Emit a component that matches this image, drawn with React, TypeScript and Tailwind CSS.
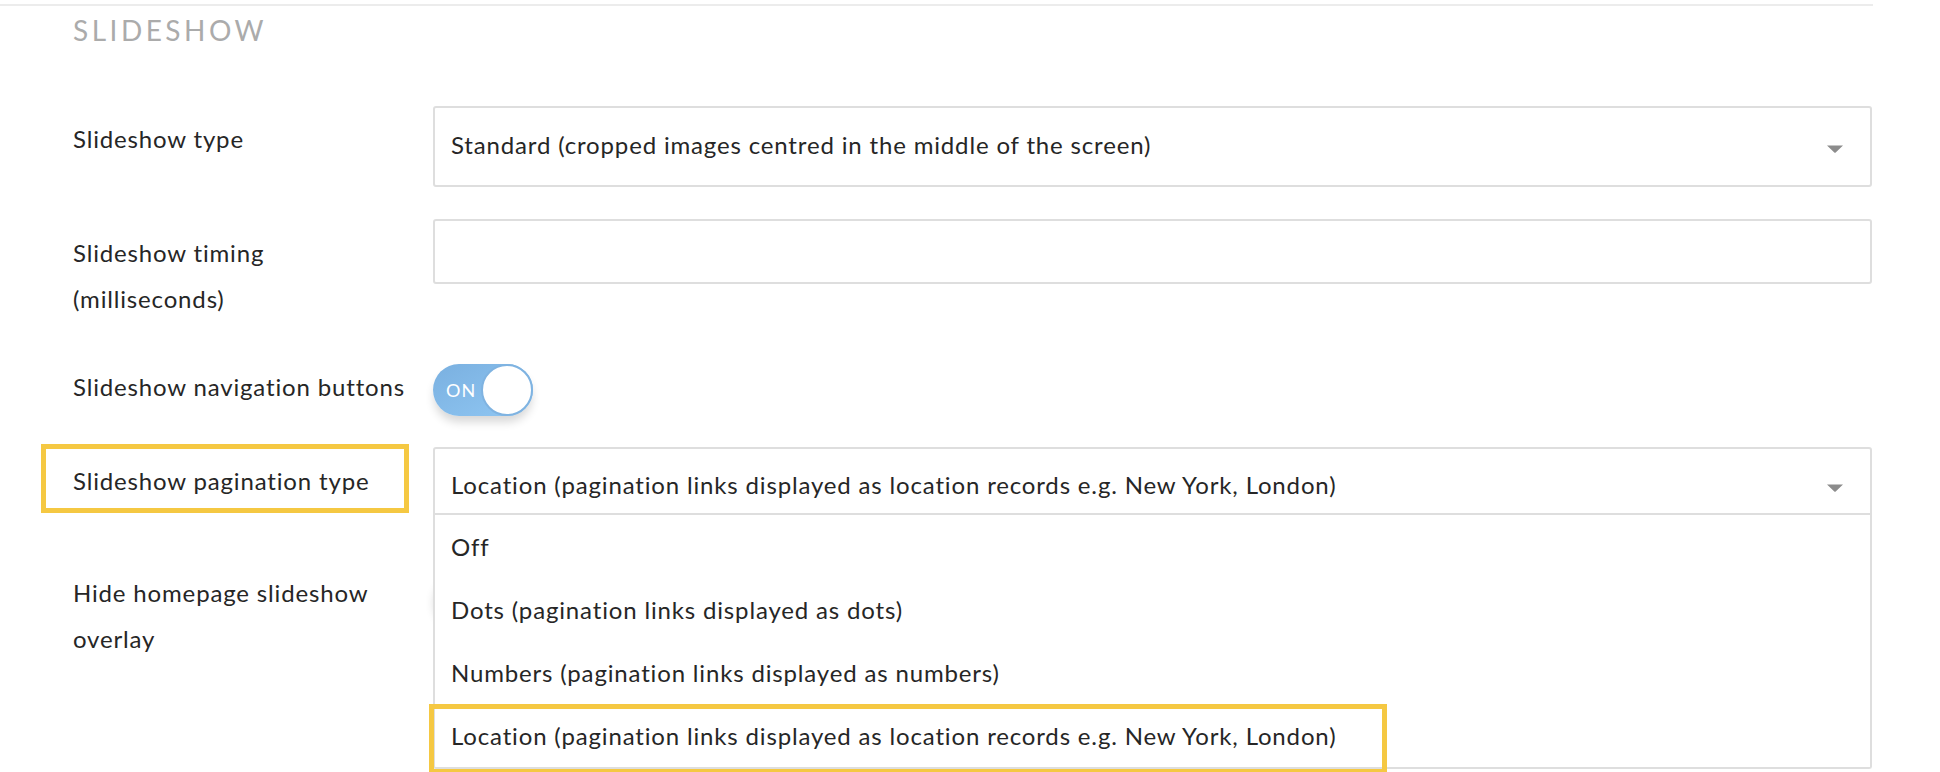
import React from 'react'

const Caret = ({ offset }: { offset: string }) => (
  <svg width="16" height="8" viewBox="0 0 16 8" className={`shrink-0 ${offset}`}>
    <path d="M0 0.4h16L8.7 7.5a1 1 0 0 1-1.4 0z" fill="#8c8c8c" />
  </svg>
)

const Toggle = ({ on }: { on: boolean }) =>
  on ? (
    <div className="flex h-[52px] w-[100px] items-center rounded-full bg-linear-to-br from-[#7ab0e0] to-[#90c7f3] shadow-[0_7px_10px_-1px_rgba(0,0,0,0.16)]">
      <span className="pl-[13px] text-[18px] leading-none tracking-[0.06em] text-white">ON</span>
      <div className="ml-auto h-[52px] w-[52px] rounded-full border-2 border-[#7fb3e1] bg-white" />
    </div>
  ) : (
    <div className="flex h-[52px] w-[100px] items-center rounded-full bg-[#e6e6e6] shadow-[0_7px_10px_-1px_rgba(0,0,0,0.16)]">
      <div className="h-[52px] w-[52px] rounded-full border-2 border-[#d6d6d6] bg-white" />
    </div>
  )

const options = [
  'Off',
  'Dots (pagination links displayed as dots)',
  'Numbers (pagination links displayed as numbers)',
  'Location (pagination links displayed as location records e.g. New York, London)',
]

export default function App() {
  return (
    <div className="h-[772px] w-[1940px] overflow-hidden bg-white font-['Lato',sans-serif] text-[24px] tracking-[0.035em] text-[#262626]">
      <div className="mt-[4px] h-[2px] w-[1873px] bg-[#ececec]" />
      <div className="w-[1872px] pl-[73px]">
        <h2 className="mt-[10px] h-[28px] text-[28px] font-normal leading-[28px] tracking-[0.125em] text-[#ababab]">
          SLIDESHOW
        </h2>

        {/* slideshow type */}
        <div className="mt-[62px] flex">
          <div className="w-[360px] shrink-0 pt-[10px] leading-[46px]">Slideshow type</div>
          <div className="flex h-[81px] flex-1 items-center justify-between rounded-[3px] border-2 border-[#dedede] pb-[4px] pl-[16px] pr-[27px]">
            <span>Standard (cropped images centred in the middle of the screen)</span>
            <Caret offset="mt-[9px]" />
          </div>
        </div>

        {/* timing */}
        <div className="mt-[32px] flex items-start">
          <div className="w-[360px] shrink-0 pt-[11px] leading-[46px]">
            Slideshow timing
            <br />
            (milliseconds)
          </div>
          <div className="h-[65px] flex-1 rounded-[3px] border-2 border-[#dedede]" />
        </div>

        {/* navigation buttons */}
        <div className="mt-[42px] flex items-start">
          <div className="w-[360px] shrink-0 leading-[46px]">Slideshow navigation buttons</div>
          <Toggle on />
        </div>

        {/* pagination type, open */}
        <div className="relative z-10 mt-[31px] flex items-start">
          <div className="relative w-[360px] shrink-0 pt-[11px] leading-[46px]">
            <div className="absolute -left-[32px] -top-[3px] h-[69px] w-[368px] border-[5px] border-[#f5c842]" />
            Slideshow pagination type
          </div>
          <div className="relative flex-1">
            <div className="flex h-[68px] items-center justify-between rounded-t-[3px] border-2 border-[#dedede] bg-white pt-[8px] pl-[16px] pr-[27px]">
              <span>{options[3]}</span>
              <Caret offset="mt-[6px]" />
            </div>
            <div className="absolute left-0 right-0 top-full rounded-b-[3px] border-2 border-t-0 border-[#dedede] bg-white">
              {options.map((o, i) => (
                <div key={o} className="relative flex h-[63px] items-center pl-[16px]">
                  {i === 3 && (
                    <div className="absolute -left-[6px] top-0 h-[70px] w-[958px] border-[5px] border-[#f5c842]" />
                  )}
                  <span className="relative">{o}</span>
                </div>
              ))}
            </div>
          </div>
        </div>

        {/* hide overlay, covered by the open list */}
        <div className="mt-[55px] flex items-start">
          <div className="w-[360px] shrink-0 leading-[46px]">
            Hide homepage slideshow
            <br />
            overlay
          </div>
          <Toggle on={false} />
        </div>
      </div>
    </div>
  )
}
